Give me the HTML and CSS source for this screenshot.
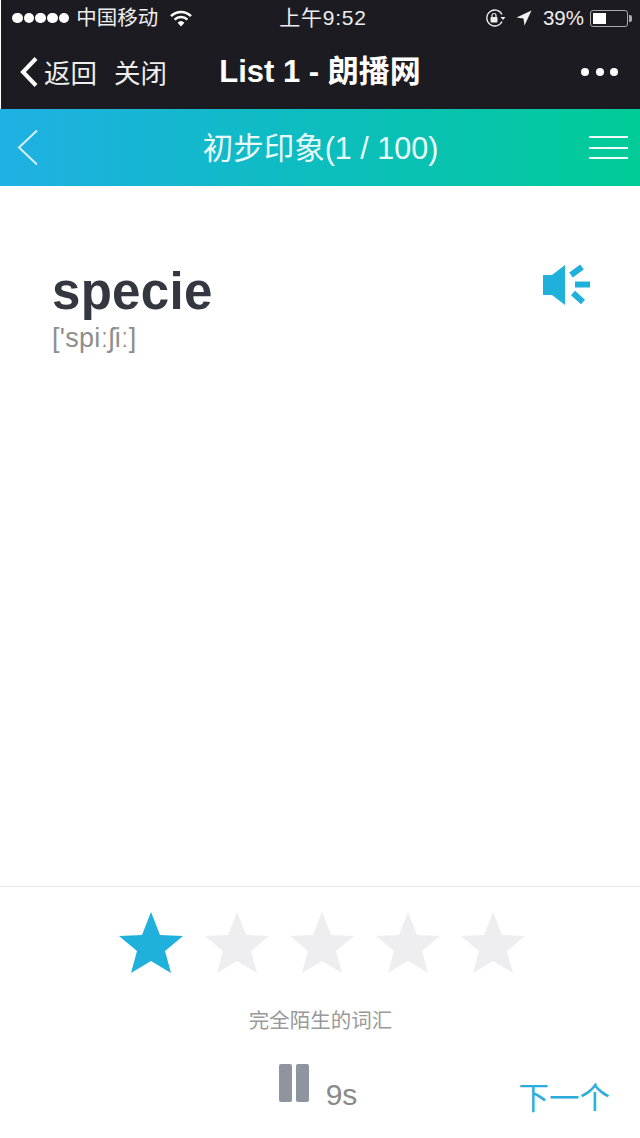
FILE: index.html
```html
<!DOCTYPE html>
<html lang="zh-CN">
  <head>
    <meta charset="UTF-8" />
    <meta name="viewport" content="width=device-width, initial-scale=1.0" />
    <title>List 1 - 朗播网</title>
    <link rel="stylesheet" href="styles.css">
  </head>
  <body>
    <header class="phone-header">
      <div class="status-bar">
        <div class="status-left">
          <span class="signal"><i></i><i></i><i></i><i></i><i></i></span>
          <span class="carrier">中国移动</span>
          <svg class="wifi" width="22" height="17" viewBox="0 0 22 17">
            <path d="M1 6.2a14 14 0 0 1 20 0" fill="none" stroke="#fff" stroke-width="2.4"/>
            <path d="M4.6 9.6a9 9 0 0 1 12.8 0" fill="none" stroke="#fff" stroke-width="2.4"/>
            <path d="M11 16.5l-3.4-3.8a5 5 0 0 1 6.8 0z" fill="#fff"/>
          </svg>
        </div>
        <div class="status-time">上午9:52</div>
        <div class="status-right">
          <svg width="21" height="18" viewBox="0 0 21 18">
            <path d="M17 5.5a8 8 0 1 0 0 7" fill="none" stroke="#eee" stroke-width="1.3"/>
            <path d="M15.5 8h5l-2.5 3z" fill="#eee"/>
            <rect x="5.5" y="8" width="7" height="5.5" rx="1" fill="#eee"/>
            <path d="M7 8V6.5a2 2 0 0 1 4 0V8" fill="none" stroke="#eee" stroke-width="1.2"/>
          </svg>
          <svg class="arrow" width="16" height="16" viewBox="0 0 16 16">
            <path d="M15.5 0.5L0.5 7.5l7 1 1 7z" fill="#f2f2f2"/>
          </svg>
          <span class="battery-text">39%</span>
          <span class="battery"><span class="battery-level"></span></span>
          <span class="battery-nub"></span>
        </div>
      </div>
      <nav class="wx-nav">
        <div class="wx-links">
          <svg class="wx-back" width="20" height="32" viewBox="0 0 20 32">
            <path d="M17 2.5L4 16l13 13.5" fill="none" stroke="#fff" stroke-width="4"/>
          </svg>
          <span>返回</span>
          <span class="wx-close">关闭</span>
        </div>
        <h1 class="wx-title">List 1 - 朗播网</h1>
        <div class="wx-more"><i></i><i></i><i></i></div>
      </nav>
    </header>

    <section class="title-bar">
      <svg width="22" height="37" viewBox="0 0 22 37">
        <path d="M20 1.5L2 18.5l18 17" fill="none" stroke="#d4f1f7" stroke-width="2"/>
      </svg>
      <h2 class="progress">初步印象(1 / 100)</h2>
      <div class="menu-icon"><i></i><i></i><i></i></div>
    </section>

    <main class="word-card">
      <div>
        <div class="word">specie</div>
        <div class="phonetic">['spiːʃiː]</div>
      </div>
      <svg class="speaker" width="47" height="44" viewBox="0 0 47 44">
        <path d="M0 12h9L22 2v40L9 32H0z" fill="#1fb0dc"/>
        <path d="M28 12l11-8M32 21.500h15M30 30l10 9" fill="none" stroke="#1fb0dc" stroke-width="6"/>
      </svg>
    </main>

    <footer class="rating-panel">
      <div class="stars">
        <svg class="star star-on" viewBox="0 0 64 62"><polygon points="32,0 41,23 64,24 46,39 52,61 32,49 12,61 18,39 0,24 23,23"/></svg>
        <svg class="star" viewBox="0 0 64 62"><polygon points="32,0 41,23 64,24 46,39 52,61 32,49 12,61 18,39 0,24 23,23"/></svg>
        <svg class="star" viewBox="0 0 64 62"><polygon points="32,0 41,23 64,24 46,39 52,61 32,49 12,61 18,39 0,24 23,23"/></svg>
        <svg class="star" viewBox="0 0 64 62"><polygon points="32,0 41,23 64,24 46,39 52,61 32,49 12,61 18,39 0,24 23,23"/></svg>
        <svg class="star" viewBox="0 0 64 62"><polygon points="32,0 41,23 64,24 46,39 52,61 32,49 12,61 18,39 0,24 23,23"/></svg>
      </div>
      <p class="rating-label">完全陌生的词汇</p>
      <div class="controls">
        <div class="timer">
          <span class="pause"><i></i><i></i></span>
          <span class="seconds">9s</span>
        </div>
        <a class="next" href="#">下一个</a>
      </div>
    </footer>
  </body>
</html>
```

FILE: styles.css
```css
* {
  box-sizing: border-box;
}
body {
  margin: 0;
  height: 1138px;
  display: flex;
  flex-direction: column;
  background-color: #fff;
  font-family: "Liberation Sans", "Noto Sans CJK SC", sans-serif;
  overflow: hidden;
}
i {
  display: block;
}

.phone-header {
  margin-left: 1px;
  height: 109px;
  background-color: #1b1b21;
  color: #fff;
}

.status-bar {
  height: 36px;
  padding: 0 8px 0 11px;
  display: grid;
  grid-template-columns: 1fr auto 1fr;
  align-items: center;
  font-size: 20.5px;
  line-height: 36px;
  color: #eee;
}
.status-left,
.status-right {
  display: flex;
  align-items: center;
}
.status-right {
  justify-content: flex-end;
}
.signal {
  display: flex;
  gap: 1.2px;
}
.signal i {
  width: 10.5px;
  height: 10.5px;
  border-radius: 50%;
  background-color: #fff;
}
.carrier {
  margin-left: 7px;
}
.wifi {
  margin-left: 12px;
}
.status-time {
  margin-left: 2px;
  font-size: 21px;
  letter-spacing: 0.8px;
}
.arrow {
  margin-left: 10px;
}
.battery-text {
  margin-left: 11px;
}
.battery {
  margin-left: 6px;
  width: 38px;
  height: 17px;
  padding: 2px;
  border: 1px solid #aaa;
  border-radius: 3px;
}
.battery-level {
  display: block;
  width: 13px;
  height: 100%;
  background-color: #fff;
}
.battery-nub {
  width: 3px;
  height: 7px;
  margin-left: 1px;
  background-color: #aaa;
  border-radius: 0 2px 2px 0;
}

.wx-nav {
  height: 73px;
  padding: 0 22px 2px 18px;
  display: grid;
  grid-template-columns: 1fr auto 1fr;
  align-items: center;
}
.wx-links {
  display: flex;
  align-items: center;
  font-size: 26.5px;
  color: #eee;
}
.wx-back {
  margin-right: 5px;
}
.wx-close {
  margin-left: 17px;
}
.wx-title {
  margin: 0 0 0 3px;
  font-size: 31px;
  font-weight: bold;
  line-height: 40px;
}
.wx-more {
  display: flex;
  justify-content: flex-end;
  gap: 6.5px;
}
.wx-more i {
  width: 8px;
  height: 8px;
  border-radius: 50%;
  background-color: #fff;
}

.title-bar {
  height: 77px;
  padding: 0 12px 0 17px;
  display: grid;
  grid-template-columns: 1fr auto 1fr;
  align-items: center;
  background: linear-gradient(90deg, #1fb0e4 0%, #0ebcc2 45%, #00cc97 100%);
}
.progress {
  margin: 0 0 0 -4px;
  font-size: 30.5px;
  font-weight: normal;
  line-height: 40px;
  color: #eafafa;
}
.menu-icon {
  justify-self: end;
  width: 39px;
  display: flex;
  flex-direction: column;
  gap: 8.5px;
}
.menu-icon i {
  height: 2px;
  background-color: #f2fbf9;
}

.word-card {
  flex: 1;
  padding: 77px 50px 0 52px;
  display: flex;
  justify-content: space-between;
  align-items: flex-start;
}
.word {
  font-size: 51px;
  font-weight: bold;
  line-height: 58px;
  letter-spacing: 0.3px;
  color: #333740;
}
.phonetic {
  font-size: 27px;
  line-height: 34px;
  letter-spacing: 0.3px;
  color: #8e8e8e;
}

.rating-panel {
  height: 252px;
  margin-left: 1px;
  border-top: 1px solid #e8e8e8;
  padding-top: 25px;
  display: flex;
  flex-direction: column;
  align-items: center;
}
.stars {
  display: flex;
  gap: 21.5px;
  padding-left: 3px;
}
.star {
  width: 64px;
  height: 62px;
  fill: #eeedef;
}
.star-on {
  fill: #1fb0dc;
}
.rating-label {
  margin: 33px 0 0;
  font-size: 20.5px;
  line-height: 28px;
  color: #999;
}
.controls {
  width: 100%;
  margin-top: 11px;
  padding: 0 30px;
  display: grid;
  grid-template-columns: 1fr auto 1fr;
}
.timer {
  grid-column: 2;
  align-self: start;
  margin: 18px 0 0 -5px;
  display: flex;
  align-items: flex-end;
  gap: 17px;
}
.pause {
  display: flex;
  gap: 4px;
}
.pause i {
  width: 13px;
  height: 38px;
  border-radius: 2px;
  background-color: #8e959f;
}
.seconds {
  font-size: 30px;
  line-height: 30px;
  margin-bottom: -8px;
  color: #8a8a8a;
}
.next {
  justify-self: end;
  margin-top: 32px;
  font-size: 30.5px;
  line-height: 40px;
  color: #2bacdb;
  text-decoration: none;
}
```
